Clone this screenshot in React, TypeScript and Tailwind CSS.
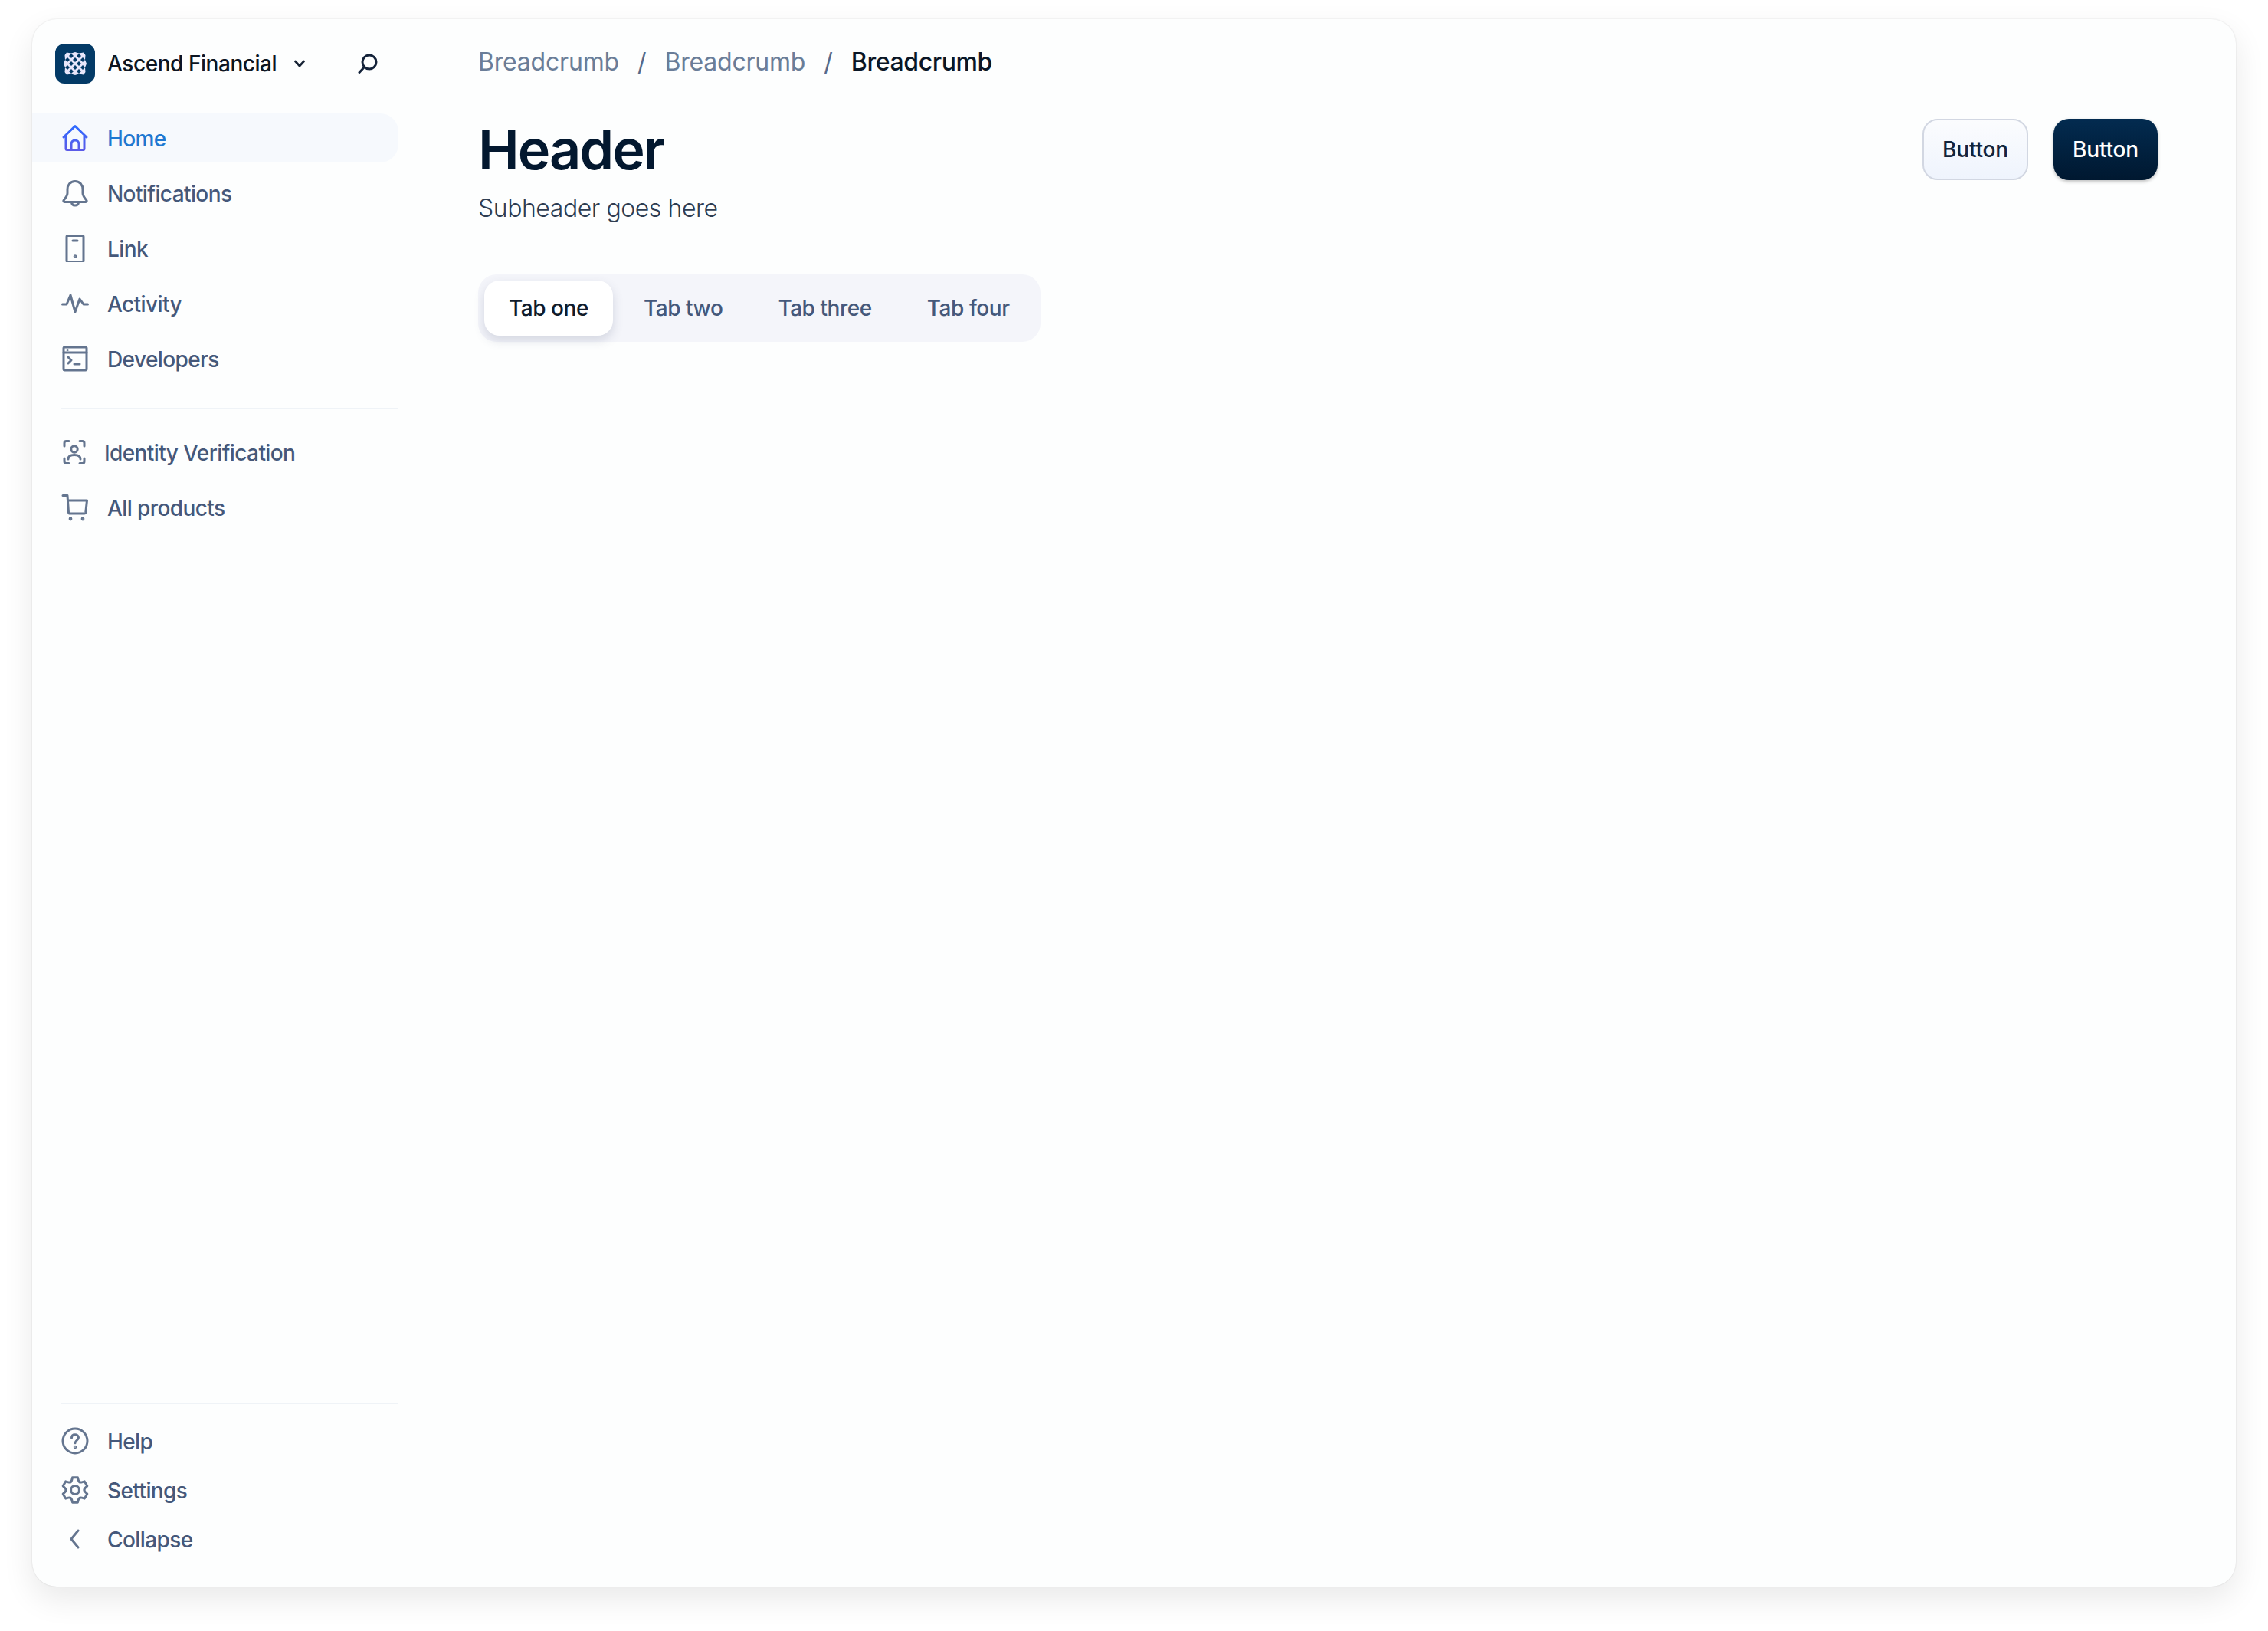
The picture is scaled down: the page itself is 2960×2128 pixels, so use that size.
import type { ReactNode } from "react";

const font = { fontFamily: "Inter, 'Noto Sans', sans-serif" };

function Icon({ children, className = "" }: { children: ReactNode; className?: string }) {
  return (
    <svg
      viewBox="0 0 36 36"
      fill="none"
      stroke="currentColor"
      strokeWidth="3"
      strokeLinecap="round"
      strokeLinejoin="round"
      className={`h-9 w-9 shrink-0 text-[#64758f] ${className}`}
    >
      {children}
    </svg>
  );
}

function LogoMark() {
  // lattice: light blob with diamond holes
  const holes = [
    [11, 6], [21, 6],
    [6, 11], [16, 11], [26, 11],
    [11, 16], [21, 16],
    [6, 21], [16, 21], [26, 21],
    [11, 26], [21, 26],
  ];
  return (
    <div className="flex h-[52px] w-[52px] shrink-0 items-center justify-center rounded-[12px] bg-[#033a66]">
      <svg viewBox="0 0 32 32" className="h-8 w-8">
        <path
          d="M5 1.5 L11 2.5 L16 1 L21 2.5 L27 1.5 L29.5 5 L29 11 L31 16 L29 21 L29.5 27 L27 30.5 L21 29.5 L16 31 L11 29.5 L5 30.5 L2.5 27 L3 21 L1 16 L3 11 L2.5 5 Z"
          fill="#e8e6fa"
        />
        {holes.map(([x, y]) => (
          <path key={`${x}-${y}`} d={`M${x} ${y - 3} L${x + 3} ${y} L${x} ${y + 3} L${x - 3} ${y} Z`} fill="#033a66" />
        ))}
      </svg>
    </div>
  );
}

const HomeIcon = () => (
  <svg viewBox="0 0 36 36" fill="none" strokeWidth="3" strokeLinecap="round" strokeLinejoin="round" className="h-9 w-9 shrink-0">
    <defs>
      <linearGradient id="homeGrad" x1="0" y1="0" x2="0" y2="1">
        <stop offset="0" stopColor="#2f6bff" />
        <stop offset="1" stopColor="#5b5be8" />
      </linearGradient>
    </defs>
    <path
      d="M3 17 L18 2.5 L33 17 M6 15 V32 C6 33 6.6 33.5 7.5 33.5 H28.5 C29.4 33.5 30 33 30 32 V15 M13 33.5 V26 C13 23 15.2 21 18 21 C20.8 21 23 23 23 26 V33.5"
      stroke="url(#homeGrad)"
    />
  </svg>
);

const BellIcon = () => (
  <Icon>
    <path d="M18 2.5 C11.5 2.5 8 7.5 8 13 V18 C8 22 5 24.5 3 27.5 C2.6 28.6 3.2 29.5 4.5 29.5 H31.5 C32.8 29.5 33.4 28.6 33 27.5 C31 24.5 28 22 28 18 V13 C28 7.5 24.5 2.5 18 2.5 Z" />
    <path d="M13.5 29.5 C13.5 32.5 15.5 34 18 34 C20.5 34 22.5 32.5 22.5 29.5" />
  </Icon>
);

const PhoneIcon = () => (
  <Icon>
    <rect x="7" y="1.5" width="22" height="34" rx="1.5" />
    <path d="M15 8 H21" />
    <circle cx="18" cy="28.5" r="0.8" fill="currentColor" />
  </Icon>
);

const ActivityIcon = () => (
  <Icon>
    <path d="M1.5 19 H7 L12 7 L18 29 L24 12 L29 19 H34.5" />
  </Icon>
);

const TerminalIcon = () => (
  <Icon>
    <rect x="3" y="3" width="30" height="30" rx="1.5" />
    <path d="M3 10 H33" />
    <path d="M8 6.5 H8.2" />
    <path d="M9 16 L13 20 L9 24" />
    <path d="M17 25 H24" />
  </Icon>
);

const FaceScanIcon = () => (
  <Icon className="mr-[-4px]">
    <path d="M4 10 V6 C4 4.5 4.8 3.5 6.5 3.5 H10 M24 3.5 H27.5 C29.2 3.5 30 4.5 30 6 V10 M30 26 V30 C30 31.5 29.2 32.5 27.5 32.5 H24 M10 32.5 H6.5 C4.8 32.5 4 31.5 4 30 V26" />
    <circle cx="17" cy="14" r="4.2" />
    <path d="M9 27 C9 23.5 12 21.5 17 21.5 C22 21.5 25 23.5 25 27" />
  </Icon>
);

const CartIcon = () => (
  <Icon>
    <path d="M2 2.5 H8 L9.5 24.5 C9.6 25.6 10.4 26 11.5 26 H30 C31 26 31.6 25.5 31.8 24.5 L33.5 9 H8.5" />
    <circle cx="12" cy="33" r="0.9" fill="currentColor" />
    <circle cx="28" cy="33" r="0.9" fill="currentColor" />
  </Icon>
);

const HelpIcon = () => (
  <Icon>
    <circle cx="18" cy="18" r="16" />
    <path d="M13.5 14 C13.5 11.2 15.5 9.8 18 9.8 C20.5 9.8 22.5 11.4 22.5 13.8 C22.5 17 18 17.2 18 20.8" />
    <circle cx="18" cy="26" r="0.7" fill="currentColor" />
  </Icon>
);

// gear outline with six flat teeth and rounded valleys
function gearPath() {
  const pt = (r: number, deg: number) => {
    const a = (deg * Math.PI) / 180;
    return `${(18 + r * Math.cos(a)).toFixed(2)} ${(18 + r * Math.sin(a)).toFixed(2)}`;
  };
  let d = "";
  for (let k = 0; k < 6; k++) {
    const a = k * 60 - 90;
    d += `${k === 0 ? "M" : "L"}${pt(16.6, a - 12)} L${pt(16.6, a + 12)} L${pt(13.4, a + 19)} Q${pt(10.6, a + 30)} ${pt(13.4, a + 41)} `;
  }
  return d + "Z";
}

const GearIcon = () => (
  <Icon>
    <path d={gearPath()} />
    <circle cx="18" cy="18" r="5.4" />
  </Icon>
);

const BackIcon = () => (
  <Icon>
    <path d="M22 7 L13 18 L22 29" />
  </Icon>
);

function NavRow({ icon, label, gap = "gap-[24px]", h = "h-[72px]" }: { icon: ReactNode; label: string; gap?: string; h?: string }) {
  return (
    <div className={`flex items-center pl-[38px] ${h} ${gap}`}>
      {icon}
      <span className="pt-[1px] text-[28px] font-medium tracking-[-0.6px] text-[#45587a]">{label}</span>
    </div>
  );
}

function Crumb({ label, last }: { label: string; last?: boolean }) {
  return <span className={last ? "font-medium tracking-[-0.4px] text-[#0a1626]" : "tracking-[-0.2px] text-[#6a7d98]"}>{label}</span>;
}

export default function App() {
  return (
    <div style={font} className="h-[2128px] w-[2960px] bg-white pb-[58px] pl-[42px] pr-[42px] pt-[25px]">
      <div className="flex h-full overflow-hidden rounded-[32px] bg-[#fdfefe] shadow-[0_0_2px_rgba(0,0,0,0.14),0_16px_40px_rgba(0,0,0,0.09)]">
        <aside className="flex w-[478px] shrink-0 flex-col">
          <div className="flex h-[123px] items-center pb-[8px] pl-[30px] pt-0">
            <LogoMark />
            <span className="ml-[16px] text-[28px] font-medium tracking-[-0.45px] text-[#0c1522]">Ascend Financial</span>
            <svg viewBox="0 0 14 10" className="ml-[23px] h-[10px] w-[14px]" fill="none" stroke="#172335" strokeWidth="2.8" strokeLinecap="round" strokeLinejoin="round">
              <path d="M1.5 2 L7 8 L12.5 2" />
            </svg>
            <svg viewBox="0 0 26 26" className="ml-[69px] h-[26px] w-[26px]" fill="none" stroke="#14233a" strokeWidth="3" strokeLinecap="round">
              <circle cx="15" cy="11" r="9" />
              <path d="M8.5 17.5 L2 24.5" />
            </svg>
          </div>
          <div className="flex h-[64px] items-center gap-[24px] rounded-r-[24px] bg-[#f6f9fd] pl-[38px]">
            <HomeIcon />
            <span className="pt-[1px] text-[28px] font-medium tracking-[-0.6px] text-[#1f78d1]">Home</span>
          </div>
          <div className="mt-[4px]">
            <NavRow icon={<BellIcon />} label="Notifications" />
            <NavRow icon={<PhoneIcon />} label="Link" />
            <NavRow icon={<ActivityIcon />} label="Activity" />
            <NavRow icon={<TerminalIcon />} label="Developers" />
          </div>
          <div className="ml-[38px] mt-[28px] h-[2px] bg-[#eff3f7]" />
          <div className="mt-[20px]">
            <NavRow icon={<FaceScanIcon />} label="Identity Verification" />
            <NavRow icon={<CartIcon />} label="All products" />
          </div>
          <div className="mt-auto ml-[38px] h-[2px] bg-[#eff3f7]" />
          <div className="mb-[30px] mt-[16px]">
            <NavRow h="h-[64px]" icon={<HelpIcon />} label="Help" />
            <NavRow h="h-[64px]" icon={<GearIcon />} label="Settings" />
            <NavRow h="h-[64px]" icon={<BackIcon />} label="Collapse" />
          </div>
        </aside>

        <main className="flex min-w-0 flex-1 flex-col pl-[104px] pr-[102px]">
          <div className="mt-[36px] flex h-[40px] items-center gap-[24px] text-[32px]">
            <Crumb label="Breadcrumb" />
            <span className="text-[#55698a]">/</span>
            <Crumb label="Breadcrumb" />
            <span className="text-[#55698a]">/</span>
            <Crumb label="Breadcrumb" last />
          </div>
          <div className="mt-[34px] flex items-start justify-between">
            <div className="pt-[20px]">
              <h1 className="text-[72px] font-semibold leading-[80px] tracking-[-2px] text-[#03182f]">Header</h1>
              <p className="mt-[17px] text-[32px] font-light leading-[40px] tracking-[-0.45px] text-[#2e3d52]">Subheader goes here</p>
            </div>
            <div className="mt-[20px] flex gap-[33px]">
              <button className="h-[80px] w-[138px] rounded-[20px] border-2 border-[#d2d7e2] bg-gradient-to-b from-[#fbfcfe] to-[#eff4fd] text-[28px] font-medium tracking-[-0.2px] text-[#13243b]">
                Button
              </button>
              <button className="h-[80px] w-[136px] rounded-[20px] bg-gradient-to-b from-[#032b50] to-[#001830] text-[28px] font-medium tracking-[-0.2px] text-white shadow-[0_2px_4px_rgba(0,0,0,0.25)]">
                Button
              </button>
            </div>
          </div>
          <div className="mt-[66px] flex h-[88px] w-fit items-center gap-[8px] rounded-[24px] bg-[#f4f5fa] p-[8px] text-[28px] font-medium tracking-[-0.45px]">
            <div className="flex h-[72px] items-center rounded-[20px] bg-white px-[32px] text-[#101b2b] shadow-[0_6px_14px_rgba(60,70,110,0.18)]">Tab one</div>
            <div className="flex h-[72px] items-center px-[32px] text-[#45587a]">Tab two</div>
            <div className="flex h-[72px] items-center px-[32px] text-[#45587a]">Tab three</div>
            <div className="flex h-[72px] items-center px-[32px] text-[#45587a]">Tab four</div>
          </div>
        </main>
      </div>
    </div>
  );
}
